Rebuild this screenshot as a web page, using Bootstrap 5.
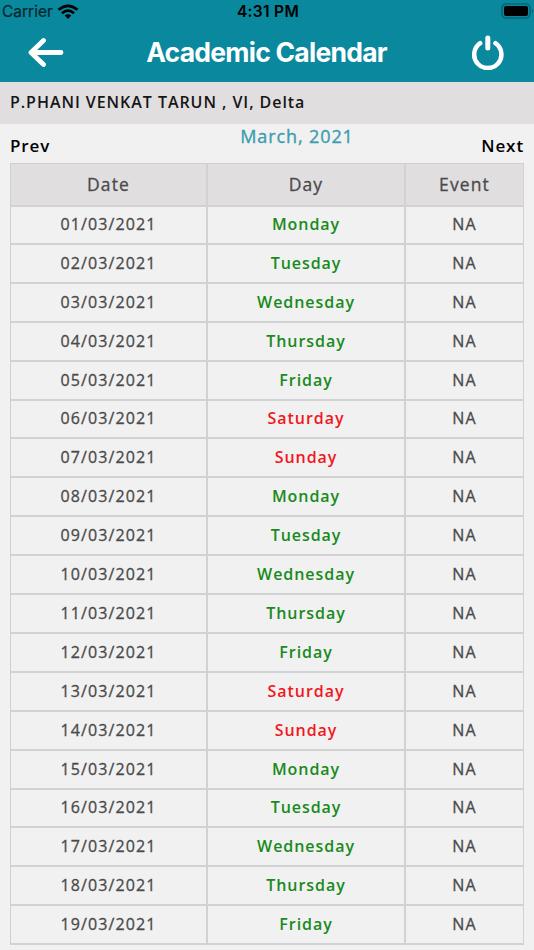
<!DOCTYPE html>
<html lang="en">
<head>
<meta charset="utf-8">
<meta name="viewport" content="width=device-width, initial-scale=1">
<title>Academic Calendar</title>
<link href="https://cdn.jsdelivr.net/npm/bootstrap@5.3.0/dist/css/bootstrap.min.css" rel="stylesheet">
<style>
body{background:#f1f1f1;font-family:"Open Sans","Noto Sans",sans-serif;font-size:16px;height:950px;overflow:hidden;color:#000}
.app-head{background:#09889e;height:82px;font-family:Inter,"Liberation Sans",sans-serif}
.status{height:22px;font-size:15.5px;line-height:22px;color:#05262c}
.status>*{flex:1 1 0}
.carrier{padding:1px 0 0 2px;-webkit-text-stroke:.2px currentColor}
.clock{padding-top:1px;font-weight:600;font-size:15.5px;letter-spacing:.3px}
.title-bar{height:60px;padding:0 29px 0 28px}
.title-bar h1{font-size:26.5px;font-weight:700;letter-spacing:-.75px;line-height:60px}
.student{background:#e0dedf;height:42px;line-height:41px;padding-left:10px;font-weight:600;font-size:16px;letter-spacing:.95px;color:#161616}
.months{height:39px;padding:0 10px;font-weight:600;letter-spacing:.9px;line-height:24px}
.month{flex:none;margin-left:60px;color:#3c9daf;font-weight:400;font-size:18px;letter-spacing:.9px;-webkit-text-stroke:.35px currentColor}
.step{flex:1 1 0;padding-top:10px;font-size:17px}
.cal{margin:0 10px;border-left:1px solid #cfcfcf;border-top:1px solid #cfcfcf;color:#4a4a4a;letter-spacing:1.1px}
.line{display:grid;grid-template-columns:197px 198px 1fr;height:38.91px;line-height:37px;text-align:center}
.line>*{border-right:2px solid #d2d2d2;border-bottom:2px solid #d2d2d2;-webkit-text-stroke:.3px currentColor}
.line>:last-child{border-right-width:1px}
.line.heading{height:41.9px;line-height:41px;background:#e0dedf;font-size:17.5px}
.line>.on,.line>.off{font-weight:600;color:#198a20;letter-spacing:.95px;-webkit-text-stroke:0}
.line>.off{color:#f01820}
</style>
<script src="https://cdn.jsdelivr.net/npm/bootstrap@5.3.0/dist/js/bootstrap.bundle.min.js"></script>
</head>
<body>
<header class="app-head">
  <div class="status d-flex">
    <div class="carrier d-flex align-items-center"><span>Carrier</span>
      <svg class="ms-1" width="22" height="16" viewBox="0 0 22 16" fill="none" stroke="#000" stroke-width="2.7"><path d="M1.500 5.8Q11-2.2 20.500 5.8M5 9.2Q11 4.2 17 9.2"/><path d="M7.7 11.5Q11 8.8 14.3 11.5L11 15z" fill="#000" stroke="none"/></svg>
    </div>
    <div class="clock text-center text-black">4:31 PM</div>
    <div class="d-flex justify-content-end align-items-center">
      <svg width="34" height="16" viewBox="0 0 34 16"><rect x="2" y="1" width="28" height="14" rx="4" fill="none" stroke="#066777" stroke-width="1.7"/><rect x="4" y="3" width="24" height="10" rx="2"/><path d="M32 6q2 2 0 4z" fill="#044d59"/></svg>
    </div>
  </div>
  <div class="title-bar d-flex align-items-center justify-content-between text-white">
    <svg width="36" height="32" viewBox="0 0 36 32" fill="none" stroke="#fff" stroke-width="4.8" stroke-linecap="round" stroke-linejoin="round"><path d="M33 16.5H3.5M15.5 4.500L3 16.500L15.500 28.500"/></svg>
    <h1 class="m-0">Academic Calendar</h1>
    <svg width="36" height="36" viewBox="0 0 36 36" fill="none" stroke="#fff" stroke-width="4.500" stroke-linecap="round"><path d="M11.200 9.200A13.600 13.600 0 1 0 26.400 9.200"/><path d="M18.800 4V14" stroke-width="5"/></svg>
  </div>
</header>
<div class="student">P.PHANI VENKAT TARUN , VI, Delta</div>
<nav class="months d-flex">
  <div class="step">Prev</div><div class="month text-nowrap">March, 2021</div><div class="step text-end">Next</div>
</nav>
<main class="cal">
  <div class="line heading"><div>Date</div><div>Day</div><div>Event</div></div>
  <div class="line"><div>01/03/2021</div><div class="on">Monday</div><div>NA</div></div>
  <div class="line"><div>02/03/2021</div><div class="on">Tuesday</div><div>NA</div></div>
  <div class="line"><div>03/03/2021</div><div class="on">Wednesday</div><div>NA</div></div>
  <div class="line"><div>04/03/2021</div><div class="on">Thursday</div><div>NA</div></div>
  <div class="line"><div>05/03/2021</div><div class="on">Friday</div><div>NA</div></div>
  <div class="line"><div>06/03/2021</div><div class="off">Saturday</div><div>NA</div></div>
  <div class="line"><div>07/03/2021</div><div class="off">Sunday</div><div>NA</div></div>
  <div class="line"><div>08/03/2021</div><div class="on">Monday</div><div>NA</div></div>
  <div class="line"><div>09/03/2021</div><div class="on">Tuesday</div><div>NA</div></div>
  <div class="line"><div>10/03/2021</div><div class="on">Wednesday</div><div>NA</div></div>
  <div class="line"><div>11/03/2021</div><div class="on">Thursday</div><div>NA</div></div>
  <div class="line"><div>12/03/2021</div><div class="on">Friday</div><div>NA</div></div>
  <div class="line"><div>13/03/2021</div><div class="off">Saturday</div><div>NA</div></div>
  <div class="line"><div>14/03/2021</div><div class="off">Sunday</div><div>NA</div></div>
  <div class="line"><div>15/03/2021</div><div class="on">Monday</div><div>NA</div></div>
  <div class="line"><div>16/03/2021</div><div class="on">Tuesday</div><div>NA</div></div>
  <div class="line"><div>17/03/2021</div><div class="on">Wednesday</div><div>NA</div></div>
  <div class="line"><div>18/03/2021</div><div class="on">Thursday</div><div>NA</div></div>
  <div class="line"><div>19/03/2021</div><div class="on">Friday</div><div>NA</div></div>
</main>
</body>
</html>
